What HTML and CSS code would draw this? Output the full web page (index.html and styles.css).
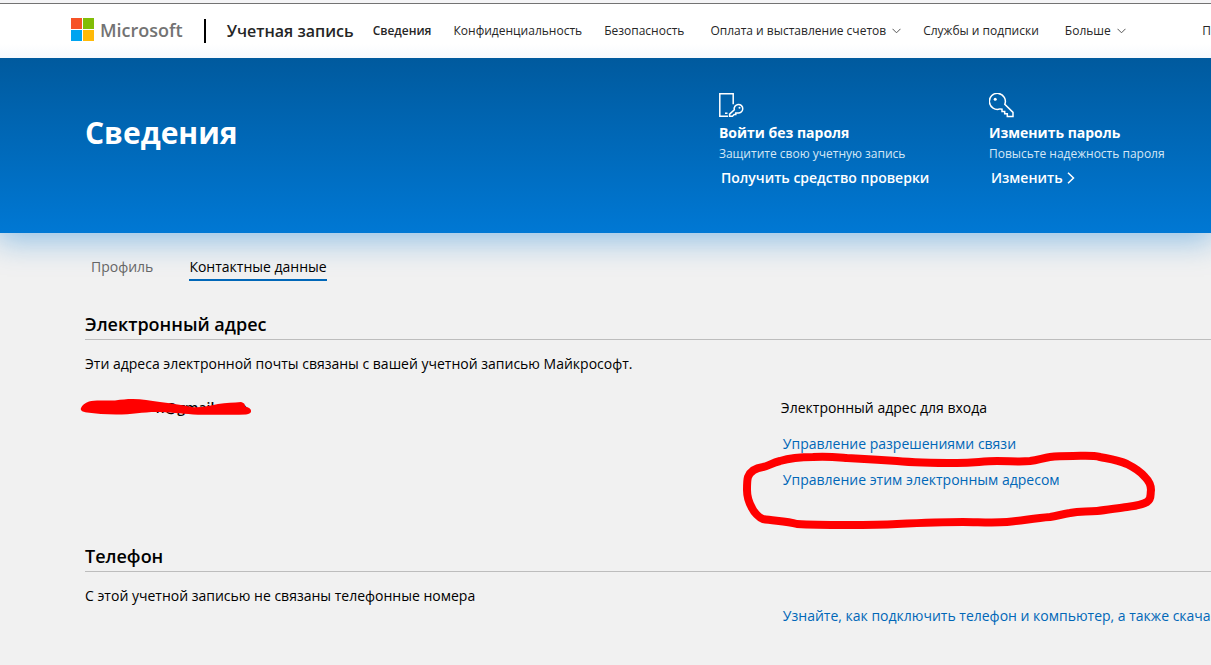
FILE: index.html
```html
<!DOCTYPE html>
<html lang="ru">
<head>
<meta charset="utf-8">
<meta name="viewport" content="width=device-width, initial-scale=1">
<title>Учетная запись Майкрософт</title>
<link rel="stylesheet" href="styles.css">
</head>
<body>
<header class="topbar">
  <a class="brand" href="#">
    <svg class="brand-mark" viewBox="0 0 23 23" aria-hidden="true">
      <path fill="#f65326" d="M0 0h11v11H0z"/><path fill="#81bd06" d="M12 0h11v11H12z"/>
      <path fill="#00a4f0" d="M0 12h11v11H0z"/><path fill="#ffba08" d="M12 12h11v11H12z"/>
    </svg>
    <span>Microsoft</span>
  </a>
  <a class="product" href="#">Учетная запись</a>
  <nav class="menu">
    <a class="menu-item current" href="#">Сведения</a>
    <a class="menu-item" href="#">Конфиденциальность</a>
    <a class="menu-item" href="#">Безопасность</a>
    <button class="menu-item dropdown" type="button">Оплата и выставление счетов
      <svg class="chevron" viewBox="0 0 9 6" aria-hidden="true"><path d="M.5.8l4 4 4-4"/></svg>
    </button>
    <a class="menu-item" href="#">Службы и подписки</a>
    <button class="menu-item dropdown" type="button">Больше
      <svg class="chevron" viewBox="0 0 9 6" aria-hidden="true"><path d="M.5.8l4 4 4-4"/></svg>
    </button>
  </nav>
  <a class="menu-item search" href="#">П</a>
</header>

<section class="hero">
  <h1>Сведения</h1>
  <div class="hero-cards">
    <article class="card">
      <svg class="card-icon" viewBox="0 0 25 25" aria-hidden="true">
        <path d="M9 23.300H.8V.8h13.400v10.500M6 20.300h2.500"/>
        <path d="M15.300 16.800a4.300 4.300 0 1 1 3.200 3.100h-1.700v1.600h-1.600l-1.800 1.800h-2.800v-2.200z"/>
        <circle class="dot" cx="20.500" cy="14.800" r="1"/>
      </svg>
      <h2>Войти без пароля</h2>
      <p>Защитите свою учетную запись</p>
      <a href="#">Получить средство проверки</a>
    </article>
    <article class="card">
      <svg class="card-icon" viewBox="0 0 25 25" aria-hidden="true">
        <path d="M15.800 11.300A8 8 0 1 0 11 15.900l2 .2v2.400h2.700v2.300h2.600v2.800H24v-4.200z"/>
        <circle class="dot" cx="6.200" cy="6.300" r="1.500"/>
      </svg>
      <h2>Изменить пароль</h2>
      <p>Повысьте надежность пароля</p>
      <a href="#">Изменить
        <svg class="arrow" viewBox="0 0 8 12" aria-hidden="true"><path d="M1 .7L6.500 6 1 11.300"/></svg>
      </a>
    </article>
  </div>
</section>

<main class="content">
  <nav class="tabs">
    <a class="tab" href="#">Профиль</a>
    <a class="tab selected" href="#" aria-current="page">Контактные данные</a>
  </nav>

  <section class="block">
    <h2>Электронный адрес</h2>
    <p class="intro">Эти адреса электронной почты связаны с вашей учетной записью Майкрософт.</p>
    <div class="row">
      <div class="address">
        <strong>n@gmail.com</strong>
        <svg class="scribble" viewBox="0 0 200 50" aria-hidden="true">
          <path d="M11 28C12 25 15 23 19 21.500C24 20 30 20.500 45 20.500C52 19.500 56 19 63 19C72 19 80 20.500 90 22C100 23 112 25 122 27C130 28 138 26 148 24C156 23 164 22.500 171 22C175 23 175 25 175 26.500C183 28 183 34 176 34.500C160 35 140 34.800 128 34.800C115 34 104 32.500 90 32C74 31.500 64 34.500 46 34.500C35 34.500 26 33.500 17 32.500C12 32 10 30 11 28Z"/>
        </svg>
      </div>
      <div class="actions">
        <p>Электронный адрес для входа</p>
        <a href="#">Управление разрешениями связи</a>
        <a href="#">Управление этим электронным адресом</a>
        <svg class="ring" viewBox="0 0 440 150" aria-hidden="true">
          <path d="M33 77C38 76 42 73 50 71C60 68 70 67 83 67C96 66 105 67 117 68C135 69 150 70 167 71C188 73 210 73 227 73C245 73 252 71 267 71C280 71 290 72 300 71C308 70 313 68 320 67C328 66 335 66 343 66C353 66 362 65 370 67C380 69 388 70 397 74C405 78 411 82 415 87C419 91 421 95 421 100C420 105 422 109 417 112C412 115 405 116 397 117C388 118 377 120 367 121C355 122 350 121 340 123C333 124 327 126 320 127C305 128 290 131 277 132C262 133 248 132 233 132C210 132 188 133 167 134C150 135 135 135 117 135C100 135 83 135 67 134C56 131 44 131 33 129C29 128 24 122 22 118C18 111 17 107 17 100C17 94 17 90 18 87C20 82 25 78 33 77Z"/>
        </svg>
      </div>
    </div>
  </section>

  <section class="block">
    <h2>Телефон</h2>
    <p class="intro">С этой учетной записью не связаны телефонные номера</p>
    <div class="row">
      <div class="actions phone">
        <a href="#">Узнайте, как подключить телефон и компьютер, а также скача</a>
      </div>
    </div>
  </section>
</main>
</body>
</html>
```
FILE: styles.css
```css
* {
  box-sizing: border-box;
}

body {
  margin: 0;
  background: #f1f1f1;
  color: #000;
  font: 14px/20px "Open Sans", "Noto Sans", sans-serif;
  overflow-x: hidden;
}

h1, h2, p {
  margin: 0;
}

a {
  color: inherit;
  text-decoration: none;
}

.topbar {
  position: relative;
  z-index: 1;
  display: flex;
  align-items: center;
  height: 58px;
  padding-left: 71px;
  border-top: 3px solid #f4f4f6;
  box-shadow: inset 0 1px #737373;
  background: linear-gradient(#fff 75%, #f6f9fd);
  color: #262626;
  white-space: nowrap;
}

.brand {
  display: flex;
  align-items: center;
  gap: 6px;
  padding-bottom: 2px;
  color: #737373;
  font-size: 18px;
  font-weight: 600;
  line-height: 24px;
}

.brand-mark {
  width: 23px;
  height: 23px;
}

.product {
  margin-left: 21px;
  padding-left: 21px;
  border-left: 2px solid #000;
  font-size: 16px;
  font-weight: 600;
  line-height: 24px;
}

.menu {
  display: flex;
  gap: 22px;
  margin-left: 19px;
}

.menu-item {
  display: flex;
  align-items: center;
  gap: 6px;
  padding: 0;
  border: 0;
  background: none;
  color: inherit;
  font: 12px/20px "Open Sans", "Noto Sans", sans-serif;
}

.dropdown {
  margin-left: 4px;
}

.current {
  font-weight: 600;
}

.chevron {
  width: 9px;
  height: 6px;
  fill: none;
  stroke: #555;
}

.search {
  margin-left: auto;
}

.hero {
  display: grid;
  grid-template-columns: 56.3% 1fr;
  height: 175px;
  padding: 35px 0 0 85px;
  background: linear-gradient(#005a9e, #0078d4);
  box-shadow: 0 4px 30px 4px #0078d466;
  color: #fff;
}

.hero h1 {
  padding-top: 20px;
  font-size: 30px;
  font-weight: 700;
  line-height: 40px;
}

.hero-cards {
  display: flex;
  white-space: nowrap;
}

.card {
  flex: 0 0 270px;
}

.card-icon {
  display: block;
  width: 25px;
  height: 25px;
  margin-bottom: 4px;
  fill: none;
  stroke: #fff;
  stroke-width: 1.5;
}

.card-icon .dot {
  fill: #fff;
  stroke: none;
}

.card h2 {
  font-size: 14px;
  font-weight: 700;
  line-height: 21px;
}

.card p {
  color: #d5e7f6;
  font-size: 12px;
  line-height: 22px;
}

.card a {
  display: flex;
  align-items: center;
  gap: 4px;
  padding: 3px 2px;
  font-weight: 600;
}

.arrow {
  width: 8px;
  height: 12px;
  fill: none;
  stroke: #fff;
  stroke-width: 1.5;
}

.content {
  padding: 24px 0 24px 85px;
  white-space: nowrap;
}

.tabs {
  display: flex;
  gap: 36px;
  padding-left: 6px;
}

.tab {
  padding-bottom: 2px;
  border-bottom: 2px solid transparent;
  color: #666;
}

.selected {
  border-color: #0067b8;
  color: #000;
}

.block {
  margin-top: 31px;
}

.block h2 {
  padding-bottom: 3px;
  border-bottom: 1px solid #bdbdbd;
  font-size: 18px;
  font-weight: 600;
  line-height: 24px;
}

.intro {
  margin-top: 14px;
}

.row {
  display: grid;
  grid-template-columns: 61.8% 1fr;
}

.address {
  position: relative;
  width: 162px;
  padding-top: 24px;
  text-align: right;
}

.address strong {
  font-weight: 600;
}

.scribble {
  position: absolute;
  top: 6px;
  left: -15px;
  width: 200px;
  height: 50px;
  fill: #f00;
}

.actions {
  position: relative;
  display: flex;
  flex-direction: column;
  grid-column: 2;
  gap: 16px;
  padding-top: 24px;
  padding-bottom: 23px;
}

.actions a {
  padding-left: 2px;
  color: #0067b8;
}

.phone {
  padding-top: 0;
}

.ring {
  position: absolute;
  top: 16px;
  left: -51px;
  width: 440px;
  height: 150px;
  fill: none;
  stroke: #f00;
  stroke-width: 8;
  stroke-linejoin: round;
  pointer-events: none;
}
```
